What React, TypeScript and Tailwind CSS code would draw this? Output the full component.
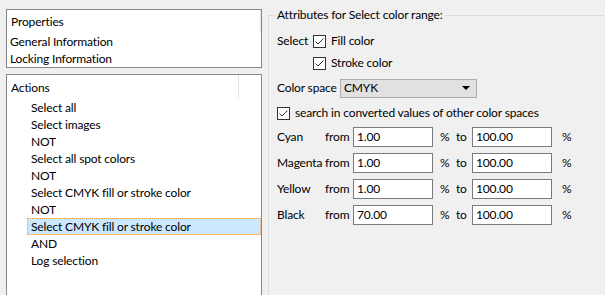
import React from 'react'

const font = { fontFamily: 'Lato, "Liberation Sans", sans-serif' }

const actions = [
  'Select all',
  'Select images',
  'NOT',
  'Select all spot colors',
  'NOT',
  'Select CMYK fill or stroke color',
  'NOT',
  'Select CMYK fill or stroke color',
  'AND',
  'Log selection',
]

function Check() {
  return (
    <svg width="13" height="13" viewBox="0 0 13 13" className="shrink-0">
      <rect x="0.5" y="0.5" width="12" height="12" fill="#fff" stroke="#333" />
      <polyline points="2.5,6.5 5,9 10.5,3.5" fill="none" stroke="#333" strokeWidth="1" />
    </svg>
  )
}

const ranges = [
  { name: 'Cyan', from: '1.00', to: '100.00' },
  { name: 'Magenta', from: '1.00', to: '100.00' },
  { name: 'Yellow', from: '1.00', to: '100.00' },
  { name: 'Black', from: '70.00', to: '100.00' },
]

export default function App() {
  return (
    <div
      className="w-[605px] h-[295px] bg-[#f0f0f0] flex overflow-hidden text-[12px] tracking-[-0.15px] text-black leading-none whitespace-nowrap"
      style={font}
    >
      {/* left lists */}
      <div className="w-[262px] shrink-0 pl-[6px] pt-[9px] flex flex-col">
        <div className="h-[60px] bg-white border border-[#828790]">
          <div className="h-[23px] flex">
            <div className="flex-1 flex items-center pl-[4px] pt-[1px]">Properties</div>
            <div className="w-[1px] bg-[#e5e5e5]" />
          </div>
          <div className="h-[17px] flex items-center pl-[3px]">General Information</div>
          <div className="h-[17px] flex items-center pl-[3px]">Locking Information</div>
        </div>

        <div className="mt-[6px] h-[240px] shrink-0 bg-white border border-[#828790]">
          <div className="h-[24px] flex">
            <div className="flex-1 flex items-center pl-[4px] pt-[2px]">Actions</div>
            <div className="w-[1px] bg-[#e5e5e5] mr-[22px]" />
          </div>
          {actions.map((a, i) =>
            i === 7 ? (
              <div
                key={i}
                className="h-[17px] ml-[20px] flex items-center pl-[3px] bg-[#cce8ff] border border-dotted border-[#f29f4a]"
              >
                {a}
              </div>
            ) : (
              <div key={i} className="h-[17px] flex items-center pl-[24px]">
                {a}
              </div>
            )
          )}
        </div>
      </div>

      {/* right group */}
      <div className="flex-1 pl-[6px] pt-[15px]">
        <div className="relative h-[300px] border-t border-l border-[#dcdcdc] pl-[8px] pt-[15px]">
          <span className="absolute left-[6px] -top-[7px] px-[2px] bg-[#f0f0f0]">
            Attributes for Select color range:
          </span>

          <div className="h-[20px] flex items-center">
            <span className="w-[36px]">Select</span>
            <Check />
            <span className="ml-[5px]">Fill color</span>
          </div>
          <div className="mt-[2px] h-[20px] flex items-center pl-[36px]">
            <Check />
            <span className="ml-[5px]">Stroke color</span>
          </div>
          <div className="mt-[5px] h-[20px] flex items-center">
            <span className="w-[63px]">Color space</span>
            <div className="w-[137px] h-[19px] bg-[#e1e1e1] border border-[#adadad] flex items-center justify-between pl-[3px] pr-[6px]">
              <span>CMYK</span>
              <svg width="8" height="4" viewBox="0 0 8 4">
                <polygon points="0,0 8,0 4,4" fill="#000" />
              </svg>
            </div>
          </div>
          <div className="mt-[5px] h-[20px] flex items-center">
            <Check />
            <span className="ml-[5px]">search in converted values of other color spaces</span>
          </div>

          {ranges.map((r, i) => (
            <div
              key={r.name}
              className={`${i === 0 ? 'mt-[4px]' : 'mt-[6px]'} h-[20px] flex items-center`}
            >
              <span className="w-[48px]">{r.name}</span>
              <span className="w-[28px]">from</span>
              <div className="w-[80px] h-[20px] bg-white border border-[#7a7a7a] flex items-center pl-[3px]">
                {r.from}
              </div>
              <span className="ml-[7px] w-[16px]">%</span>
              <span className="w-[16px]">to</span>
              <div className="w-[80px] h-[20px] bg-white border border-[#7a7a7a] flex items-center pl-[3px]">
                {r.to}
              </div>
              <span className="ml-[10px]">%</span>
            </div>
          ))}
        </div>
      </div>
    </div>
  )
}
